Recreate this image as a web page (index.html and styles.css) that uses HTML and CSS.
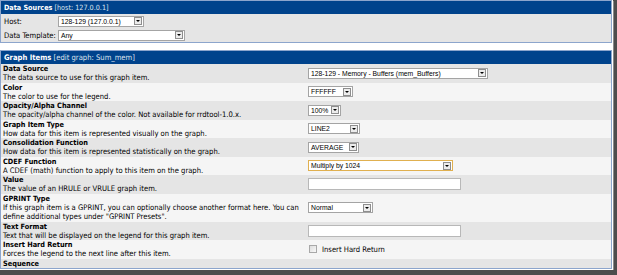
FILE: index.html
```html
<!DOCTYPE html>
<html lang="en">
<head>
    <meta charset="UTF-8">
    <title>Graph Items</title>
    <link rel="stylesheet" href="styles.css">
</head>
<body>
    <div class="shot">
        <div class="box top">
            <div class="hdr"><b>Data Sources</b> <span class="sub">[host: 127.0.0.1]</span></div>
            <div class="top-row">
                <span>Host:</span>
                <span class="sel w-host"><span class="val">128-129 (127.0.0.1)</span><span class="arrow"></span></span>
            </div>
            <div class="top-row">
                <span>Data Template:</span>
                <span class="sel w-tpl"><span class="val">Any</span><span class="arrow"></span></span>
            </div>
        </div>

        <div class="box items">
            <div class="hdr"><b>Graph Items</b> <span class="sub">[edit graph: Sum_mem]</span></div>

            <div class="row dark">
                <div class="desc"><b>Data Source</b><br>The data source to use for this graph item.</div>
                <span class="sel w-ds"><span class="val">128-129 - Memory - Buffers (mem_Buffers)</span><span class="arrow"></span></span>
            </div>
            <div class="row">
                <div class="desc"><b>Color</b><br>The color to use for the legend.</div>
                <span class="sel w-color"><span class="val">FFFFFF</span><span class="arrow"></span></span>
            </div>
            <div class="row dark">
                <div class="desc"><b>Opacity/Alpha Channel</b><br>The opacity/alpha channel of the color. Not available for rrdtool-1.0.x.</div>
                <span class="sel w-alpha"><span class="val">100%</span><span class="arrow"></span></span>
            </div>
            <div class="row">
                <div class="desc"><b>Graph Item Type</b><br>How data for this item is represented visually on the graph.</div>
                <span class="sel w-type"><span class="val">LINE2</span><span class="arrow"></span></span>
            </div>
            <div class="row dark">
                <div class="desc"><b>Consolidation Function</b><br>How data for this item is represented statistically on the graph.</div>
                <span class="sel w-cf"><span class="val">AVERAGE</span><span class="arrow"></span></span>
            </div>
            <div class="row">
                <div class="desc"><b>CDEF Function</b><br>A CDEF (math) function to apply to this item on the graph.</div>
                <span class="sel w-cdef focus"><span class="val">Multiply by 1024</span><span class="arrow"></span></span>
            </div>
            <div class="row dark">
                <div class="desc"><b>Value</b><br>The value of an HRULE or VRULE graph item.</div>
                <span class="txt"></span>
            </div>
            <div class="row">
                <div class="desc"><b>GPRINT Type</b><br>If this graph item is a GPRINT, you can optionally choose another format here. You can define additional types under "GPRINT Presets".</div>
                <span class="sel w-gprint"><span class="val">Normal</span><span class="arrow"></span></span>
            </div>
            <div class="row dark">
                <div class="desc"><b>Text Format</b><br>Text that will be displayed on the legend for this graph item.</div>
                <span class="txt"></span>
            </div>
            <div class="row">
                <div class="desc"><b>Insert Hard Return</b><br>Forces the legend to the next line after this item.</div>
                <label class="check"><span class="box-check"></span>Insert Hard Return</label>
            </div>
            <div class="row dark">
                <div class="desc"><b>Sequence</b></div>
                <span></span>
            </div>
        </div>
    </div>
</body>
</html>
```

FILE: styles.css
```css
html, body {
    margin: 0;
    padding: 0;
}

body {
    background-color: #4d4d4d;
    font-family: "DejaVu Sans Condensed", "DejaVu Sans", sans-serif;
    font-size: 7.6px;
    color: #000;
}

.shot {
    width: 612px;
    padding: 0 1px 1px 0;
    background-color: #fff;
    box-shadow: 1px 1px 0 #8a8a8a;
}

.box {
    border: 1px solid #8ca5cc;
    background-color: #f5f5f5;
}

.top {
    background-color: #e5e5e5;
}

.items {
    margin-top: 7px;
}

.hdr {
    background-color: #00438c;
    color: #fff;
    padding: 1px 3px;
    line-height: 11px;
}

.hdr .sub {
    color: #dde4ee;
}

.top .hdr {
    font-size: 7.2px;
}

.top-row {
    display: grid;
    grid-template-columns: 54px 1fr;
    align-items: center;
    height: 14px;
    padding: 0 3px;
}

.row {
    display: grid;
    grid-template-columns: 305px 1fr;
    align-items: center;
    padding-left: 2px;
    line-height: 9.27px;
}

.row.dark {
    background-color: #e5e5e5;
}

.desc {
    padding-right: 4px;
}

.desc b {
    font-size: 7.3px;
}

/* fake select boxes */
.sel {
    display: flex;
    align-items: center;
    justify-content: space-between;
    box-sizing: border-box;
    height: 11px;
    padding: 0 1px 0 2px;
    background-color: #fff;
    border: 1px solid #a4a4a4;
    font-family: "Liberation Sans", Arial, sans-serif;
    font-size: 6.8px;
    line-height: 9px;
}

.sel.focus {
    border-color: #e0b050;
}

.arrow {
    display: flex;
    align-items: center;
    justify-content: center;
    box-sizing: border-box;
    width: 8px;
    height: 8px;
    border: 1px solid #8e8e8e;
    background-color: #ececec;
}

.arrow::after {
    content: "";
    border-left: 2px solid transparent;
    border-right: 2px solid transparent;
    border-top: 2px solid #000;
}

.w-host { width: 86px; }
.w-tpl { width: 127px; }
.w-ds { width: 180px; }
.w-color { width: 45px; }
.w-alpha { width: 33px; }
.w-type { width: 52px; }
.w-cf { width: 51px; }
.w-cdef { width: 145px; }
.w-gprint { width: 65px; }

.txt {
    display: block;
    box-sizing: border-box;
    width: 153px;
    height: 12px;
    background-color: #fff;
    border: 1px solid #b8b8b8;
}

.check {
    display: flex;
    align-items: center;
    gap: 5px;
    padding-left: 1px;
}

.box-check {
    box-sizing: border-box;
    width: 8px;
    height: 8px;
    border: 1px solid #a8a8a8;
    background: linear-gradient(135deg, #dcdcdc, #f8f8f8);
}
```
